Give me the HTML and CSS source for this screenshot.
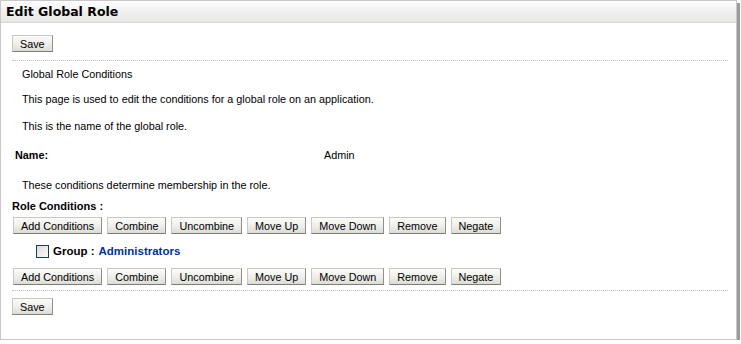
FILE: index.html
```html
<!DOCTYPE html>
<html lang="en">
<head>
  <meta charset="UTF-8">
  <title>Edit Global Role</title>
  <link rel="stylesheet" href="styles.css">
</head>
<body>
  <div class="panel">
    <div class="panel-header">Edit Global Role</div>
    <div class="panel-body">
      <!-- barra superior -->
      <div class="toolbar top">
        <button class="btn">Save</button>
      </div>

      <div class="info">
        <p class="info-title">Global Role Conditions</p>
        <p class="info-desc">This page is used to edit the conditions for a global role on an application.</p>
        <p class="info-name">This is the name of the global role.</p>
      </div>

      <div class="field-row">
        <span class="field-label">Name:</span>
        <span class="field-value">Admin</span>
      </div>

      <p class="info-line">These conditions determine membership in the role.</p>

      <div class="conditions-title">Role Conditions :</div>
      <div class="btn-row">
        <button class="btn">Add Conditions</button>
        <button class="btn">Combine</button>
        <button class="btn">Uncombine</button>
        <button class="btn">Move Up</button>
        <button class="btn">Move Down</button>
        <button class="btn">Remove</button>
        <button class="btn">Negate</button>
      </div>

      <div class="group-row">
        <span class="check"></span>
        <span class="group-label">Group :</span>
        <a class="group-link">Administrators</a>
      </div>

      <div class="btn-row">
        <button class="btn">Add Conditions</button>
        <button class="btn">Combine</button>
        <button class="btn">Uncombine</button>
        <button class="btn">Move Up</button>
        <button class="btn">Move Down</button>
        <button class="btn">Remove</button>
        <button class="btn">Negate</button>
      </div>

      <!-- barra inferior -->
      <div class="toolbar bottom">
        <button class="btn">Save</button>
      </div>
    </div>
  </div>
</body>
</html>
```

FILE: styles.css
```css
body {
  margin: 0;
  font-family: "Liberation Sans", Arial, sans-serif;
  font-size: 10.8px;
  color: #000;
  background-color: #fff;
}
.panel {
  width: 735px;
  height: 338px;
  border: 1px solid #c8c8c8;
  box-shadow: 3px 3px 0 #9c9c9c;
  background-color: #fff;
}
.panel-header {
  height: 21px;
  line-height: 21px;
  padding-left: 5px;
  font-family: "DejaVu Sans", sans-serif;
  font-weight: bold;
  font-size: 12.5px;
  background: linear-gradient(#ffffff, #f1f1f1 45%, #e6e6e4);
  border-bottom: 1px solid #d6d6d6;
}
.panel-body {
  padding: 12px 8px 0 11px;
}
.toolbar {
  display: flex;
}
.toolbar.top {
  padding-bottom: 8px;
  border-bottom: 1px dotted #bdbdbd;
}
.toolbar.bottom {
  margin-top: 5px;
  padding-top: 7px;
  border-top: 1px dotted #bdbdbd;
}
.btn {
  font-family: inherit;
  font-size: 10.8px;
  height: 17px;
  padding: 0 7px;
  margin: 0;
  color: #000;
  background: linear-gradient(#fbfbf9, #ecece8 60%, #dcdcd6);
  border: 1px solid;
  border-color: #c9c9c4 #8e8e8a #7c7c78 #c9c9c4;
  border-radius: 0;
  cursor: pointer;
}
.info {
  padding-left: 10px;
}
.info p,
.info-line {
  margin: 0;
  line-height: 14px;
}
.info .info-title {
  padding-top: 6px;
}
.info .info-desc {
  margin-top: 11px;
}
.info .info-name {
  margin-top: 13px;
}
.field-row {
  display: flex;
  margin-top: 15px;
  padding-left: 3px;
  line-height: 14px;
}
.field-label {
  font-weight: bold;
  width: 309px;
}
.info-line {
  margin-top: 16px;
  padding-left: 10px;
}
.conditions-title {
  margin-top: 7px;
  font-weight: bold;
  font-size: 11px;
  line-height: 14px;
}
.btn-row {
  display: flex;
  gap: 5px;
  margin-top: 4px;
  padding-left: 1px;
}
.group-row {
  display: flex;
  align-items: center;
  margin: 10px 0 10px 24px;
  font-weight: bold;
  font-size: 11.5px;
  height: 14px;
}
.check {
  width: 11px;
  height: 11px;
  border: 1px solid #1c3b5a;
  background: linear-gradient(135deg, #dcdcd6, #fbfbf9);
  margin-right: 4px;
}
.group-label {
  margin-right: 4px;
}
.group-link {
  color: #003399;
  cursor: pointer;
}
```
